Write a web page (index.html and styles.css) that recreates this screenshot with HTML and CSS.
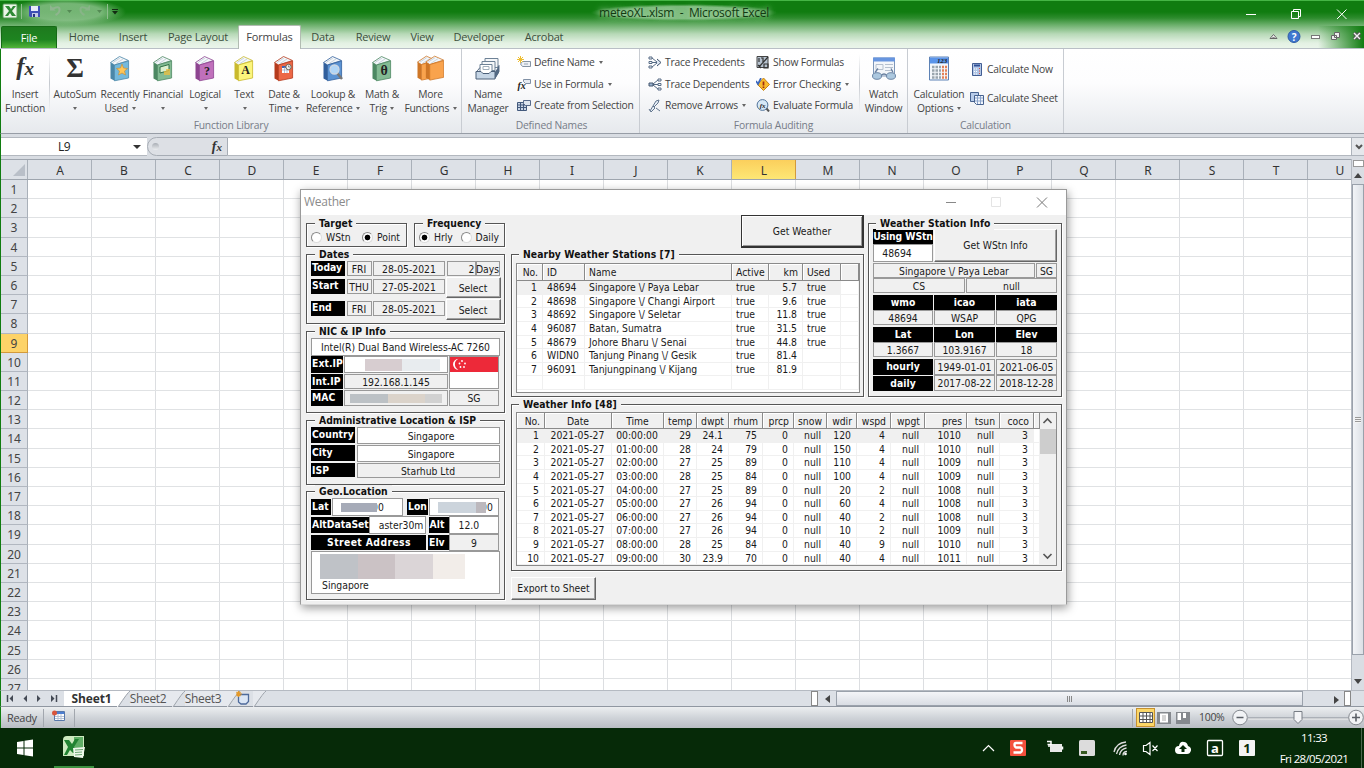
FILE: index.html
```html
<!DOCTYPE html>
<html lang="en">
<head>
<meta charset="utf-8">
<title>meteoXL.xlsm - Microsoft Excel</title>
<link rel="stylesheet" href="styles.css">
</head>
<body>
<svg class="defs" width="0" height="0">
  <symbol id="book" viewBox="0 0 20 26">
    <path d="M.5 7 9.500 1 18.500 5 4.500 9.500Z" fill="#f4f7fa" stroke="currentColor" stroke-width=".8"/>
    <path d="M3 7 10 2.500M6 8 13 3.500" stroke="#b8c4d0" stroke-width=".7"/>
    <path d="M.5 7 4.500 9.500V25.300L.5 23Z" fill="currentColor"/>
    <path class="cover" d="M4.500 9.500 18.600 5.500V22.500L4.500 25.300Z"/>
    <path d="M4.500 9.500 18.600 5.500V22.500L4.500 25.300Z" fill="none" stroke="currentColor" stroke-width=".8"/>
  </symbol>
</svg>
<div class="screen">
  <header class="top">
    <div class="titlebar">
      <div class="quick">
        <svg width="122" height="24" viewBox="0 0 122 24">
          <rect x="3" y="4" width="14" height="14" rx="1" fill="#eaf6e6" stroke="#5b9b5b"/><path d="M5 6h4l2 3 2-3h3l-4 5 4 5h-4l-2-3-2 3H5l4-5z" fill="#2f8a35"/>
          <path d="M21.500 4v15M107.500 4v15" stroke="#8fbf8f"/>
          <path d="M29 6h11v11H30l-1-1z" fill="#3d4fb5"/><path d="M31 6h7v5h-7z" fill="#e8ecfa"/><path d="M32 13h6v4h-6z" fill="#c3c9e6"/><path d="M33 14h2v3h-2z" fill="#26357e"/>
          <path d="M52 9q8-4 7.500 1 0 3-4 5" fill="none" stroke="#8fb58f" stroke-width="2"/><path d="M50 10.500V5l5.500 5.500z" fill="#8fb58f"/>
          <path d="M88 9q-8-4-7.500 1 0 3 4 5" fill="none" stroke="#88b488" stroke-width="2"/><path d="M90 10.500V5l-5.500 5.500z" fill="#88b488"/>
          <path d="M67 10h5l-2.500 3zM97 10h5l-2.500 3z" fill="#558a55"/>
          <path d="M112 9.500h6" stroke="#132b13"/><path d="M112 11h6l-3 3.500z" fill="#132b13"/>
        </svg>
      </div>
      <div class="title"><span>meteoXL.xlsm&nbsp; -&nbsp; Microsoft Excel</span></div>
      <svg class="wincontrols" width="140" height="26" viewBox="0 0 140 26" fill="none" stroke="#fff" stroke-width="1">
        <path d="M22 14.500h10M67.500 11.500h7v7h-7zM69.500 11V9.500h7v7H75M113 9.500l9.500 9.500M122.500 9.500 113 19"/>
      </svg>
    </div>
    <nav class="tabs">
      <span class="tab file">File</span><span class="tab w48">Home</span><span class="tab w50">Insert</span><span class="tab w80">Page Layout</span><span class="tab active">Formulas</span><span class="tab w44">Data</span><span class="tab w56">Review</span><span class="tab w42">View</span><span class="tab w72">Developer</span><span class="tab w58">Acrobat</span>
      <svg class="doccontrols" width="104" height="22" viewBox="0 0 104 22">
        <path d="M10 12.500 13.500 8.500 17 12.500zM12 12.500l1.500-1.500 1.500 1.500" fill="#f4f4f4" stroke="#666"/>
        <circle cx="34" cy="10.500" r="6" fill="#3f78d0" stroke="#2e5ba6"/><text x="34" y="14.500" class="help">?</text>
        <rect x="51.500" y="9.500" width="8" height="3" fill="#fff" stroke="#777"/>
        <path d="M74.500 6.500h5v5h-5zM71.500 9.500h5v4h-5z" fill="#eee" stroke="#666"/>
        <path d="M94 7l6 6M100 7l-6 6" stroke="#555" stroke-width="3.400"/><path d="M94 7l6 6M100 7l-6 6" stroke="#f2f2f2" stroke-width="1.400"/>
      </svg>
    </nav>
  </header>

  <section class="ribbon">
    <div class="group g1">
      <div class="tools">
        <div class="big w49"><i class="fx">f<small>x</small></i><b>Insert<br>Function</b></div>
        <div class="vsep"></div>
        <div class="big w50b"><i class="sigma">Σ</i><b>AutoSum<br><u></u></b></div>
        <div class="big w40"><svg class="bk blue"><use href="#book"/><path d="m12 9 1.500 4 4 .5-3 2.500 1 4-3.500-2-3.500 2 1-4-3-2.500 4-.5z" fill="#ffc658" stroke="#c98a2c" stroke-width=".6"/></svg><b>Recently<br>Used <u></u></b></div>
        <div class="big w46"><svg class="bk green"><use href="#book"/><path d="m7 12 9-2.500v6L7 18z" fill="#dcefcf" stroke="#2f7046"/><path d="M11 19h6M11 17h6M13 15h4" stroke="#f0c040" stroke-width="1.500"/></svg><b>Financial<br><u></u></b></div>
        <div class="big w38"><svg class="bk purple"><use href="#book"/><text x="12" y="20">?</text></svg><b>Logical<br><u></u></b></div>
        <div class="big w40"><svg class="bk yellow"><use href="#book"/><text x="11.500" y="19">A</text></svg><b>Text<br><u></u></b></div>
        <div class="big w40"><svg class="bk red"><use href="#book"/><path d="M8 11h7v7H8z" fill="#fff"/><path d="M8 12h7" stroke="#4063b0" stroke-width="2"/><path d="M8 15h7M10.500 12v6M13 12v6" stroke="#8798c0" stroke-width=".6"/><circle cx="14.500" cy="12" r="2.700" fill="#f3f3f3" stroke="#665"/><path d="M14.500 10.500V12H16" fill="none" stroke="#444" stroke-width=".6"/></svg><b>Date &amp;<br>Time <u></u></b></div>
        <div class="big w58"><svg class="bk navy"><use href="#book"/><path d="m14 18 5 6" stroke="#777" stroke-width="2.500"/><circle cx="11.500" cy="14.500" r="4.500" fill="#bfe0fb" fill-opacity=".85" stroke="#cfd8e2" stroke-width="1.300"/></svg><b>Lookup &amp;<br>Reference <u></u></b></div>
        <div class="big w40"><svg class="bk green"><use href="#book"/><text x="12" y="20" class="theta">θ</text></svg><b>Math &amp;<br>Trig <u></u></b></div>
        <div class="big w57"><svg class="bk orange two" viewBox="0 0 26 26"><use href="#book" width="19" height="25"/><use href="#book" x="8" width="19" height="25"/></svg><b>More<br>Functions <u></u></b></div>
      </div>
      <div class="caption">Function Library</div>
    </div>
    <div class="group g2">
      <div class="tools">
        <div class="big w52"><svg class="ic" width="26" height="26" viewBox="0 0 26 26"><path d="M10 3h13v9H10z" fill="#f5f7f9" stroke="#6e8296"/><path d="M7 6h13v9H7z" fill="#f5f7f9" stroke="#6e8296"/><path d="M5 9h12v9H5z" fill="#fff" stroke="#6e8296"/><path d="M8 11h6v3H8z" fill="none" stroke="#a0aebb"/><path d="M1 17 5 12M23 11l1-1v6l-4 7" fill="#5d7189" stroke="#5d7189"/><path d="M1 16h5l2 2h6l2-2h4v7.500H1z" fill="#c5d5e5" stroke="#4c6079"/><path d="M20 16l4-5v6l-4 6z" fill="#536983"/></svg><b>Name<br>Manager</b></div>
        <div class="smalls">
          <div class="sm"><svg viewBox="0 0 14 13"><path d="M5.500 5.500h8v5h-8l-2-2.500z" fill="#eef1f5" stroke="#8593a3"/><path d="M7 8h4" stroke="#99a6b4"/><path d="M3.500 0v7M0 3.500h7M1 1l5 5M6 1 1 6" stroke="#efbe30"/></svg>Define Name <u></u></div>
          <div class="sm"><svg viewBox="0 0 14 13"><path d="M6.500 1.500h7v4h-5l-2-2z" fill="#e6ebf2" stroke="#8090a5"/><text x="4.500" y="11" class="mini big9">fx</text></svg>Use in Formula <u></u></div>
          <div class="sm"><svg viewBox="0 0 14 13"><path d="M.5 3.500h9v8h-9z" fill="#c9d5e6" stroke="#42597c"/><path d="M0 6h9M0 8.500h9M3.500 4v7M6.500 4v7" stroke="#42597c"/><path d="M6.500 1.500h7v5h-5l-2-2z" fill="#dde5ef" stroke="#56698a"/></svg>Create from Selection</div>
        </div>
      </div>
      <div class="caption shift">Defined Names</div>
    </div>
    <div class="group g3">
      <div class="tools">
        <div class="smalls s109">
          <div class="sm"><svg viewBox="0 0 14 13"><path d="M1 1h3v2H1zM1 5.500h3v2H1zM1 10h3v2H1z" fill="#fff" stroke="#566b85"/><path d="M4 2 9 6M4 6.500h5M4 11l5-4" stroke="#566b85"/><path d="m9 3 4 3.500L9 10" fill="#dbe5f1" stroke="#44566f"/></svg>Trace Precedents</div>
          <div class="sm"><svg viewBox="0 0 14 13"><path d="M10 1h3v2h-3zM10 5.500h3v2h-3zM10 10h3v2h-3z" fill="#fff" stroke="#566b85"/><path d="M10 2 5 6M10 6.500H5M10 11 5 7" stroke="#566b85"/><path d="M1 5h4v3H1z" fill="#9bb3d0" stroke="#44566f"/></svg>Trace Dependents</div>
          <div class="sm"><svg viewBox="0 0 14 13"><path d="m5 7 3-5 3-1-1 3-4 4M2 12l3-5 2 2-4 4M8 9l4 3M1 10l2 3" fill="#e7eef7" stroke="#61758d"/></svg>Remove Arrows <u></u></div>
        </div>
        <div class="smalls s103">
          <div class="sm"><svg viewBox="0 0 14 13"><path d="M1 .5h11v11H1z" fill="#b6c2cf" stroke="#444"/><path d="M3 2v4M5 2h2v4M3 11 12 1M8 8h4v4H8zM2 9l3 3" fill="none" stroke="#333" stroke-width="1.200"/></svg>Show Formulas</div>
          <div class="sm"><svg viewBox="0 0 14 13"><path d="m7.500 0 6 6.500-6 6-6-6z" fill="#f9ba2c" stroke="#c58416"/><path d="M7.500 3.500v4M7.500 8.500V10" stroke="#9c2d11" stroke-width="1.700"/><path d="m0 3 2 3 3-6" fill="none" stroke="#3a67bf" stroke-width="1.700"/></svg>Error Checking <u></u></div>
          <div class="sm"><svg viewBox="0 0 14 13"><circle cx="6.500" cy="6" r="5.400" fill="#d7e8f7" stroke="#52749b"/><path d="m10.500 9.500 2.500 3" stroke="#555" stroke-width="2"/><text x="6.500" y="8.500" class="mini">fx</text></svg>Evaluate Formula</div>
        </div>
        <div class="vsep"></div>
        <div class="big w48b"><svg class="ic" width="26" height="26" viewBox="0 0 26 26"><path d="M2.500 2.500h21v18h-21z" fill="#f3f6fa" stroke="#7d96b8"/><path d="M2 2h22v4H2z" fill="#6795df"/><path d="M5 9h7v5H5zM14 9h8M14 12h8M14 15h8" fill="none" stroke="#b5c0ce"/><path d="M4 17l3-4M22 17l-2-4M10 20q3-3 6 0" fill="none" stroke="#677e9e" stroke-width="1.300"/><ellipse cx="6" cy="20.500" rx="4.500" ry="3.300" fill="#acc8df" stroke="#6c86a5"/><ellipse cx="20" cy="20.500" rx="4.500" ry="3.300" fill="#acc8df" stroke="#6c86a5"/></svg><b>Watch<br>Window</b></div>
      </div>
      <div class="caption">Formula Auditing</div>
    </div>
    <div class="group g4">
      <div class="tools">
        <div class="big w60"><svg class="ic" width="22" height="26" viewBox="0 0 22 26"><path d="M1.500 1.500h19v23h-19z" fill="#f4f7fb" stroke="#5d82b5"/><path d="M2 2h18v6H2z" fill="#5a94ea"/><path d="M4 11.500h9M4 15h9M4 18.500h9M4 22h9" stroke="#9aa5ad" stroke-width="2.300" stroke-dasharray="2.500 1"/><path d="M14 11.500h5M14 15h5M14 18.500h5M14 22h5" stroke="#e38158" stroke-width="2.300" stroke-dasharray="2 1"/><text x="14" y="7" class="mini">123</text></svg><b>Calculation<br>Options <u></u></b></div>
        <div class="smalls calc">
          <div class="sm"><svg viewBox="0 0 14 13"><path d="M2.500.5h9v12h-9z" fill="#b2c6e5" stroke="#425d92"/><path d="M4 2.500h6" stroke="#2f4f97" stroke-width="2"/><path d="M4 6h4M4 8.500h4M4 11h4" stroke="#fff" stroke-dasharray="1 1"/><path d="M9.500 5v7" stroke="#d24d45" stroke-dasharray="1 1.500"/></svg>Calculate Now</div>
          <div class="sm"><svg viewBox="0 0 14 13"><path d="M.5.500h8v9h-8z" fill="#b8cce9" stroke="#47628f"/><path d="M4.500 3.500h9v9h-7l-2-2z" fill="#f2f6fc" stroke="#47628f"/><path d="M5 6h8M5 9h8M7.500 4v8M10.500 4v8" stroke="#8ba4cb"/></svg>Calculate Sheet</div>
        </div>
      </div>
      <div class="caption">Calculation</div>
    </div>
  </section>

  <section class="formulabar">
    <div class="namebox"><span>L9</span><u></u></div>
    <div class="fxarea"><i class="knob"></i><span class="fxs">f<small>x</small></span></div>
    <div class="fxinput"></div>
    <div class="fxdrop"><svg width="13" height="19" viewBox="0 0 13 19"><path d="m4 7 3 3 3-3" fill="none" stroke="#555" stroke-width="2"/></svg></div>
  </section>

  <main class="sheet">
    <div class="sheetgrid">
      <div class="colheads" id="cols"><div class="corner"></div></div>
      <div id="rows"></div>
    </div>
    <div class="vscroll"><div class="split"></div><div class="arr"><i class="up"></i></div><div class="vthumb"><i></i></div><div class="arr low"><i class="down"></i></div></div>
  </main>

  <footer class="sheettabs">
    <svg class="nav" width="64" height="16" viewBox="0 0 64 16"><path d="M12 4v7L8.500 7.500zM26 4v7l-3.500-3.500zM36 4v7l3.500-3.500zM50 4v7l3.500-3.500z" fill="#444a55"/><path d="M6.500 4v7M55.500 4v7" stroke="#444a55" stroke-width="1.500"/></svg>
    <span class="st on">Sheet1</span><svg class="slash" viewBox="0 0 13 16"><path d="M0 0h13Q9 3 1 16H0z" fill="#fff"/><path d="M13 0Q11 1 1 16" fill="none" stroke="#9da3ab"/></svg>
    <span class="st">Sheet2</span><svg class="slash" viewBox="0 0 13 16"><path d="M0 0h13L1 16H0z" fill="#e6e9ee"/><path d="M13 0Q11 1 1 16" fill="none" stroke="#9da3ab"/></svg>
    <span class="st">Sheet3</span><svg class="slash" viewBox="0 0 13 16"><path d="M0 0h13L1 16H0z" fill="#e6e9ee"/><path d="M13 0Q11 1 1 16" fill="none" stroke="#9da3ab"/></svg>
    <svg class="newsheet" width="17" height="16" viewBox="0 0 17 16"><path d="M2.500 3.500h10v7l-2.500 2.500H5l-2.500-2z" fill="#dbe6f5" stroke="#4d6a9b" stroke-width="1.300"/><path d="M2.500 0v6M0 3h6M.5 1l4 4M4.500 1l-4 4" stroke="#e49a2b" stroke-width="1.200"/></svg>
    <svg class="slash" viewBox="0 0 13 16"><path d="M0 0h13L1 16H0z" fill="#e6e9ee"/><path d="M13 0Q11 1 1 16" fill="none" stroke="#9da3ab"/></svg>
    <div class="filler"></div>
    <div class="grab"></div>
    <div class="harr"><i class="left"></i></div>
    <div class="hthumb"><i></i><i></i><i></i></div>
    <div class="harr wide"><i class="right"></i></div>
    <div class="grab"></div>
    <div class="end"></div>
  </footer>

  <div class="status">
    <span class="ready">Ready</span><i class="ssep"></i>
    <svg class="macro" width="14" height="12" viewBox="0 0 14 12"><path d="M2.500 1.500h10v9h-10z" fill="#fff" stroke="#5878aa"/><path d="M3 3h9" stroke="#4c7ed1" stroke-width="2"/><path d="M3 6.500h9M3 8.500h9M6 4v6M9 4v6" stroke="#b6c3d6"/><circle cx="2.500" cy="3" r="2.500" fill="#d8553c"/></svg>
    <i class="ssep"></i>
    <div class="filler"></div>
    <i class="ssep"></i>
    <span class="view sel"><svg width="14" height="12" viewBox="0 0 14 12"><path d="M.5.500h13v10H.5zM0 4h14M0 7.500h14M4 0v11M7.500 0v11M11 0v11" fill="#fff" stroke="#555"/></svg></span>
    <span class="view"><svg width="14" height="12" viewBox="0 0 14 12"><path d="M0 0h14v12H0z" fill="#85898e"/><path d="M3 1.500h8v9H3z" fill="#fff"/><path d="M5 4h4M5 6h4M5 8h4" stroke="#aaa"/></svg></span>
    <span class="view"><svg width="14" height="12" viewBox="0 0 14 12"><path d="M0 0h14v12H0z" fill="#85898e"/><path d="M1.500 1v7H5V1M7 1v5h3V1" fill="#fff"/></svg></span>
    <span class="pct">100%</span>
    <svg class="zoom" width="132" height="20" viewBox="0 0 132 20"><path d="M16 10h108" stroke="#878d95"/><path d="M16 11h108" stroke="#eee"/><circle cx="8" cy="9.500" r="7.300" fill="#f1f3f5" stroke="#83888e"/><circle cx="124" cy="9.500" r="7.300" fill="#f1f3f5" stroke="#83888e"/><path d="M4.500 9.500h7M120 9.500h8M124 5.500v8" stroke="#5b6067" stroke-width="1.600"/><path d="M62 3.500h8v8l-4 4-4-4z" fill="#f3f4f6" stroke="#777d84"/></svg>
  </div>

  <div class="taskbar">
    <svg class="start" width="54" height="40" viewBox="0 0 54 40"><path d="m17 14 6.500-1v6.500H17zM24.500 12.800 33 11.500v8h-8.500zM17 20.500h6.500V27L17 26zM24.500 20.500H33v8l-8.500-1.300z" fill="#fff"/></svg>
    <div class="task"><svg width="24" height="24" viewBox="0 0 24 24"><path d="M5 1h17v20H1V5q0-4 4-4z" fill="#cdeac0"/><path d="M12 2h9v12H12z" fill="#5fae66"/><path d="M2 5h5l3 4 3-5h4l-5 8 4 6h-5l-3-3-3 5H2l4-8z" fill="#218332"/><path d="m11 13 12-1-2 11-9-1z" fill="#eff8ec"/><path d="m13 15 8-.5M13 17.500l7-.5M13 20l7-.5" stroke="#6ca873"/></svg></div>
    <div class="filler"></div>
    <svg class="tray" width="284" height="40" viewBox="976 0 284 40">
      <path d="m983 23 5.500-5.500L994 23" fill="none" stroke="#fff" stroke-width="1.200"/>
      <rect x="1010" y="12" width="16" height="16" rx="1" fill="#f4503c"/><path d="M1022.500 15h-6.500q-1.500 0-1.500 2t1.500 2.500h4.500q1.500.5 1.500 2.500t-1.500 2.500h-7" fill="none" stroke="#fff" stroke-width="2.400"/>
      <rect x="1050" y="16" width="12" height="8" fill="#e8e8e8"/><path d="M1047 13.500h4v3h-3.500M1049 16v3M1062.500 18.500v3" fill="none" stroke="#fff" stroke-width="1.500"/>
      <rect x="1079" y="12" width="16" height="16" rx="1.500" fill="#dcdcdc"/><path d="M1081 24.500h6" stroke="#365a20" stroke-width="3"/>
      <path d="M1114 24q2-9 12-10M1116.500 26q2-8 10-9M1119.500 27q1-6 7-7M1123 27.500q0-4 4-4" fill="none" stroke="#ddd" stroke-width="1.300"/><circle cx="1125.500" cy="26" r="1.300" fill="#fff"/>
      <path d="M1143.500 17.500h2.500l4-3v12l-4-3h-2.500zM1152.500 17.500l5 5.500M1157.500 17.500l-5 5.500" fill="none" stroke="#fff" stroke-width="1.200"/>
      <path d="M1179 26a4 4 0 0 1 0-8q1-5 5-4 3 0 4 4 3.500 1 3 4.500-1 3.500-4 3.500z" fill="#fff"/><path d="M1183 17l4 4h-2.500v3h-3v-3h-2.500z" fill="#08290a"/>
      <rect x="1207.500" y="12.500" width="15" height="15" rx="1" fill="none" stroke="#fff" stroke-width="1.300"/><text x="1215" y="24.500" class="tr">a</text>
      <rect x="1239" y="12" width="16" height="16" rx="1" fill="#f4f4f4"/><text x="1247" y="24.500" class="tr dark">1</text>
    </svg>
    <div class="clock"><span>11:33</span><span>Fri 28/05/2021</span></div>
    <i class="peek"></i>
  </div>

  <div class="dialog">
    <div class="dtitle"><span>Weather</span><svg width="116" height="25" viewBox="0 0 116 25" fill="none"><path d="M0 12.500h10" stroke="#888"/><path d="M45.500 7.500h9v9h-9z" stroke="#e4e4e4"/><path d="m91 7.500 10 10M101 7.500l-10 10" stroke="#777"/></svg></div>
    <div class="dbody">
      <div class="left">
        <div class="pair">
          <div class="frame target"><span class="lg">Target</span><label><i class="radio"></i>WStn</label><label><i class="radio on"></i>Point</label></div>
          <div class="frame freq"><span class="lg">Frequency</span><label><i class="radio on"></i>Hrly</label><label><i class="radio"></i>Daily</label></div>
        </div>
        <div class="frame dates"><span class="lg">Dates</span>
          <div class="drow"><span class="k">Today</span><span class="c">FRI</span><span class="c">28-05-2021</span><span class="duo"><span class="c num">2</span><span class="c">Days</span></span></div>
          <div class="drow r2"><span class="k">Start</span><span class="c">THU</span><span class="c">27-05-2021</span><span class="btn">Select</span></div>
          <div class="drow r3"><span class="k">End</span><span class="c">FRI</span><span class="c">28-05-2021</span><span class="btn">Select</span></div>
        </div>
        <div class="frame nic"><span class="lg">NIC &amp; IP Info</span>
          <div class="c w wide">Intel(R) Dual Band Wireless-AC 7260</div>
          <div class="nicgrid">
            <span class="k">Ext.IP</span><span class="c w"><i class="mask m1"></i></span>
            <span class="flag"><svg width="47" height="15" viewBox="0 0 47 15"><path d="M8.500 1.800a5.500 5.500 0 1 0 0 11 6 6 0 0 1 0-11" fill="#fff"/><g fill="#fff"><circle cx="12" cy="4" r=".9"/><circle cx="9.500" cy="6.500" r=".9"/><circle cx="15" cy="6.500" r=".9"/><circle cx="10.500" cy="10" r=".9"/><circle cx="14" cy="10" r=".9"/></g></svg></span>
            <span class="k">Int.IP</span><span class="c">192.168.1.145</span>
            <span class="k">MAC</span><span class="c"><i class="mask m2"></i></span><span class="c">SG</span>
          </div>
        </div>
        <div class="frame admin"><span class="lg">Administrative Location &amp; ISP</span>
          <span class="k">Country</span><span class="c w">Singapore</span>
          <span class="k">City</span><span class="c w">Singapore</span>
          <span class="k">ISP</span><span class="c nudge">Starhub Ltd</span>
        </div>
        <div class="frame geo"><span class="lg">Geo.Location</span>
          <div class="g1r"><span class="k">Lat</span><span class="c w ov"><i class="mask m3"></i>00</span><span class="k lon">Lon</span><span class="c w ov2"><i class="mask m4"></i>00</span></div>
          <div class="g2r"><span class="k">AltDataSet</span><span class="c w r">aster30m</span><span class="k al">Alt</span><span class="c w twelve">12.0</span></div>
          <div class="g3r"><span class="k ctr">Street Address</span><span class="k al">Elv</span><span class="c">9</span></div>
          <div class="addr"><div class="mask m5"></div>Singapore</div>
        </div>
      </div>
      <div class="right">
        <div class="upper">
          <div class="mid">
            <div class="getw">Get Weather</div>
            <div class="frame near"><span class="lg">Nearby Weather Stations [7]</span>
              <div class="list"><table id="near"></table></div>
            </div>
          </div>
          <div class="frame info"><span class="lg">Weather Station Info</span>
            <div class="inf0"><div class="stack"><span class="k">Using WStn</span><span class="c w">48694</span></div><span class="btn">Get WStn Info</span></div>
            <div class="inf1"><span class="c">Singapore \/ Paya Lebar</span><span class="c">SG</span></div>
            <div class="inf2"><span class="c">CS</span><span class="c">null</span></div>
            <div class="inf3">
              <span class="k">wmo</span><span class="k">icao</span><span class="k">iata</span>
              <span class="c">48694</span><span class="c">WSAP</span><span class="c">QPG</span>
              <span class="k gap">Lat</span><span class="k gap">Lon</span><span class="k gap">Elev</span>
              <span class="c">1.3667</span><span class="c">103.9167</span><span class="c">18</span>
              <span class="k gap">hourly</span><span class="c gap">1949-01-01</span><span class="c gap">2021-06-05</span>
              <span class="k last">daily</span><span class="c">2017-08-22</span><span class="c">2018-12-28</span>
            </div>
          </div>
        </div>
        <div class="frame weather"><span class="lg">Weather Info [48]</span>
          <div class="list wl"><table id="wx"></table>
            <div class="lscroll"><svg width="15" height="16" viewBox="0 0 15 16"><path d="m3.500 10 4-4 4 4" fill="none" stroke="#555" stroke-width="1.600"/></svg><i></i><svg width="15" height="17" viewBox="0 0 15 17"><path d="m3.500 6 4 4 4-4" fill="none" stroke="#555" stroke-width="1.600"/></svg></div>
          </div>
        </div>
        <div class="btn export">Export to Sheet</div>
      </div>
    </div>
  </div>
</div>
<script src="app.js"></script>
</body>
</html>
```
FILE: styles.css
```css
* { box-sizing: border-box; }
body { margin: 0; width: 1364px; height: 768px; overflow: hidden; font: 10.3px/13px "Open Sans", "Noto Sans", sans-serif; color: #444; }
.defs { position: absolute; }
svg { display: block; flex: none; }
u { display: inline-block; width: 0; height: 0; border: 2.5px solid transparent; border-top: 3px solid #666; border-bottom: 0; vertical-align: middle; margin-left: 1px; text-decoration: none; }
.screen { position: relative; display: flex; flex-direction: column; width: 1364px; height: 768px; background: #dde1e7; }
.filler { flex: 1; }

/* Title bar and ribbon tabs */
.top { height: 49px; background: linear-gradient(#45b545 0 1px, #107c10 1px 12px, #2d8c2d 18px, #6cb06c 25px, #b7d9b7 34px, #e3f1e3 43px, #eaf5ea); border-bottom: 1px solid #b9bfc6; position: relative; }
.titlebar { display: flex; height: 26px; justify-content: space-between; }
.quick { width: 340px; background: radial-gradient(ellipse 60px 14px at 66px 12px, rgba(150,200,150,.75) 60%, transparent); }
.title { width: 684px; text-align: center; font-size: 12px; line-height: 26px; color: #123a12; letter-spacing: -.3px; padding-left: 4px; }
.title span { padding: 0 8px; background: radial-gradient(closest-side, rgba(160,208,160,.75) 70%, transparent); text-shadow: 0 0 5px #a0cfa0, 0 0 8px #a0cfa0; }
.wincontrols { margin-left: 200px; }
.tabs { display: flex; padding-left: 1px; height: 22px; background: linear-gradient(90deg, transparent 1318px, #107c10 1364px); font-size: 11px; letter-spacing: -.2px; }
.tab { text-align: center; line-height: 22px; color: #3c4f3c; white-space: nowrap; }
.file { width: 56px; color: #fff; background: linear-gradient(#1e7a1e, #1e8420 60%, #52b53a); border: 1px solid #156a15; border-bottom: 0; border-radius: 2px 2px 0 0; line-height: 21px; margin-right: 3px; }
.active { width: 63px; height: 24px; margin-top: -1px; background: #fff; border: 1px solid #b2bcb2; border-bottom: 0; border-radius: 2px 2px 0 0; color: #444; z-index: 1; }
.w44 { width: 44px; } .w56 { width: 56px; } .w42 { width: 42px; } .w72 { width: 72px; } .w58 { width: 58px; } .w80 { width: 80px; }
.w48 { width: 48px; } .w50 { width: 50px; } .w50b { width: 50px; }
.doccontrols { margin-left: auto; }
.help { font: bold 10px "Open Sans", sans-serif; fill: #fff; text-anchor: middle; }

/* Ribbon */
.ribbon { display: flex; height: 85px; background: linear-gradient(#fff 0, #fdfdfe 40%, #e6e9ed); border-left: 1px solid #107c10; border-bottom: 1px solid #979da6; letter-spacing: -.2px; }
.group { display: flex; flex-direction: column; border-right: 1px solid #c8ccd2; }
.g1 { width: 461px; } .g2 { width: 178px; } .g3 { width: 268px; } .g4 { width: 156px; }
.tools { display: flex; height: 70px; }
.caption { text-align: center; color: #777c88; line-height: 13px; }
.shift { padding-left: 2px; }
.big { display: flex; flex-direction: column; align-items: center; padding-top: 6px; }
.big b { font-weight: normal; text-align: center; white-space: nowrap; line-height: 13.500px; margin-top: 6px; }
.big > i, .big > svg { height: 27px; flex: none; }
.w49 { width: 48px; } .w40 { width: 40px; } .w46 { width: 46px; } .w38 { width: 38px; } .w57 { width: 57px; } .w52 { width: 52px; } .w48b { width: 47px; } .w60 { width: 62px; }
.big.w58 { width: 58px; }
.vsep { width: 1px; height: 58px; margin-top: 5px; background: linear-gradient(transparent, #c4c8ce, transparent); }
.fx { font: italic bold 25px/24px "Liberation Serif", serif; color: #333; }
.fx small { font-size: 19px; }
.sigma { font: bold 27px/27px "Liberation Serif", serif; color: #333; }
.bk { width: 20px; height: 26px; }
.bk use { width: 20px; height: 26px; }
.bk text { font: bold 12px "Liberation Serif", serif; text-anchor: middle; fill: #222; }
.bk .theta { font-size: 14px; }
.bk.two { width: 27px; }
.bk.two use { width: 19px; }
.blue { color: #4a87a8; fill: #74b9dc; } .green { color: #4c8862; fill: #83bb93; } .purple { color: #8d4490; fill: #c070bb; }
.yellow { color: #c9b92c; fill: #fcf57c; } .red { color: #b53a1c; fill: #ec6746; } .navy { color: #315f9c; fill: #5b93d3; } .orange { color: #ce7626; fill: #f9a34d; }
.smalls { display: flex; flex-direction: column; padding: 3px 0 0 3px; gap: 0; }
.s109 { width: 112px; padding-left: 8px; } .s103 { width: 107px; padding-left: 4px; }
.sm { display: flex; align-items: center; height: 21.600px; white-space: nowrap; gap: 3px; }
.sm svg { width: 14px; height: 13px; }
.sm u { margin-left: 1px; }
.calc { padding: 6px 0 0 0; } .calc .sm { height: 29px; }
.mini { font: italic bold 7px "Liberation Serif", serif; text-anchor: middle; fill: #222; }
.big9 { font-size: 10px; }

/* Formula bar */
.formulabar { display: flex; height: 25px; padding-top: 3px; padding-bottom: 3px; background: #d8dce2; border-left: 1px solid #107c10; }
.namebox { width: 146px; background: #fff; border: solid #b3b8bf; border-width: 1px 0; display: flex; align-items: center; padding-left: 57px; font-size: 12px; color: #222; }
.namebox span { width: 75px; letter-spacing: -.4px; }
.namebox u { border-width: 4px 4px 0; border-top-color: #333; margin: 0; }
.fxarea { width: 81px; border: 1px solid #a7adb5; border-radius: 10px 0 0 10px; display: flex; justify-content: space-between; align-items: center; padding: 0 5px 0 4px; background: #dde0e5; }
.knob { width: 7px; height: 7px; border-radius: 50%; background: linear-gradient(#a9aeb5, #eceef0); }
.fxs { font: italic bold 14px/14px "Liberation Serif", serif; color: #333; }
.fxs small { font-size: 11px; }
.fxinput { flex: 1; background: #fff; border: solid #b3b8bf; border-width: 1px 0; }
.fxdrop { width: 13px; border: 1px solid #adb3bb; border-right: 0; background: #e5e8ec; }

/* Worksheet */
.sheet { display: flex; height: 531px; border-left: 1px solid #107c10; overflow: hidden; }
.sheetgrid { width: 1350px; overflow: hidden; background: #fff; }
.colheads { display: flex; height: 21px; border: solid #9ea5ae; border-width: 1px 0; background: #dde1e7; }
.corner { width: 27px; border-right: 1px solid #a9b0b9; background: #dde1e7; flex: none; display: flex; align-items: flex-end; justify-content: flex-end; padding: 0 2px 3px 0; }
.corner::after { content: ""; border: 6px solid #b9bfc8; border-top-color: transparent; border-left-color: transparent; }
.ch { width: 64px; flex: none; border-right: 1px solid #a9b0b9; text-align: center; font: 12px/21px "Noto Sans", sans-serif; color: #333; padding-left: 1px; }
.ch.sel { background: linear-gradient(#fbcf5c, #fde775); border-color: #d39a3b; }
.row { display: flex; height: 19.200px; }
.rh { width: 27px; background: #dde1e7; border-right: 1px solid #a9b0b9; border-bottom: 1px solid #b1b7c0; text-align: center; font: 12px/20px "Noto Sans", sans-serif; color: #444; overflow: visible; }
.rh.sel { background: #fdd368; border-color: #d39a3b; }
.cells { flex: 1; border-bottom: 1px solid #e0e2e4; background: repeating-linear-gradient(90deg, transparent 0 63px, #dcdee1 63px 64px); }
.vscroll { width: 13px; display: flex; flex-direction: column; background: #d9dde3; border-left: 1px solid #b4b9c1; }
.split { height: 7px; margin: 1px 0 0 1px; border: 1px solid #999; background: #fff; }
.arr { height: 17px; display: flex; align-items: center; justify-content: center; }
.up { border: 4.500px solid transparent; border-bottom: 5px solid #444; border-top: 0; }
.down { border: 4.500px solid transparent; border-top: 5px solid #444; border-bottom: 0; }
.vthumb { height: 471px; border: 1px solid #9aa1ab; background: linear-gradient(90deg, #f2f4f7, #dce0e6); display: flex; align-items: center; justify-content: center; }
.vthumb i { width: 6px; height: 6px; background: repeating-linear-gradient(#999 0 1px, #f3f3f3 1px 2px); }
.low { margin-top: auto; height: 18px; }

/* Sheet tabs and horizontal scroll */
.sheettabs { display: flex; height: 17px; border-top: 1px solid #b5bac2; border-bottom: 1px solid #9097a1; background: #dce0e6; align-items: stretch; border-left: 1px solid #107c10; }
.nav { margin-right: -1px; }
.st { width: 42px; font-size: 12px; line-height: 15px; text-align: center; letter-spacing: -.35px; background: #e6e9ee; color: #555; text-indent: -6px; white-space: nowrap; }
.st.on { width: 53px; background: #fff; font-weight: bold; color: #333; text-indent: 2px; letter-spacing: -.1px; }
.slash { width: 13px; height: 16px; }
.newsheet { margin-left: -4px; }
.grab { width: 7px; border: 1px solid #888; background: #fff; }
.harr { width: 18px; display: flex; align-items: center; justify-content: center; }
.harr.wide { width: 41px; justify-content: flex-end; padding-right: 5px; }
.harr .left { border: 4px solid transparent; border-right: 5px solid #444; border-left: 0; }
.harr .right { border: 4px solid transparent; border-left: 5px solid #444; border-right: 0; }
.hthumb { width: 467px; border: 1px solid #9aa1ab; background: linear-gradient(#f4f5f8, #d9dde4); display: flex; gap: 1px; align-items: center; justify-content: center; }
.hthumb i { width: 1px; height: 6px; background: #888; }
.end { width: 13px; }

/* Status bar */
.status { display: flex; height: 21px; align-items: center; background: linear-gradient(#eceef0, #d0d4d9 50%, #b9bdc3); border-left: 1px solid #107c10; font-size: 11px; }
.ready { width: 42px; padding-left: 6px; letter-spacing: -.3px; }
.ssep { width: 1px; height: 18px; background: #a2a7ae; }
.macro { margin: 0 8px 3px; }
.view { width: 19px; height: 19px; display: flex; align-items: center; justify-content: center; }
.sel.view { background: #fcd768; border: 1px solid #c6912f; margin-left: 3px; margin-right: -1px; }
.pct { width: 40px; padding-left: 7px; font-size: 10.500px; letter-spacing: -.3px; }

/* Taskbar */
.taskbar { display: flex; height: 40px; background: #062a08; color: #fff; }
.task { width: 40px; display: flex; align-items: center; justify-content: center; border-bottom: 2px solid #3c9140; }
.tray { margin-right: 16px; }
.tr { font: bold 13px "Open Sans", sans-serif; fill: #fff; text-anchor: middle; }
.tr.dark { fill: #082a08; }
.clock { width: 76px; display: flex; flex-direction: column; align-items: center; font: 11.500px/21px "Open Sans", sans-serif; letter-spacing: -.65px; white-space: nowrap; margin-top: -1px; }
.peek { width: 1px; background: #4d664e; margin: 0 2px 0 9px; }

/* Weather window, floating over the worksheet */
.dialog { position: absolute; left: 300px; top: 189px; width: 767px; height: 416px; border: 1px solid #9a9a9a; border-bottom-color: #d8d8d8; background: #f0f0f0; box-shadow: 1px 3px 9px rgba(0,0,0,.4); color: #1a1a1a; font: 10.3px/13px "DejaVu Sans Condensed", "Noto Sans", sans-serif; }
.dtitle { display: flex; justify-content: space-between; height: 25px; background: #fff; font: 12px/24px "Open Sans", sans-serif; letter-spacing: -.25px; color: #8b8b8b; padding: 0 4px 0 3px; }
.dbody { display: flex; gap: 6px; padding-left: 5px; }
.frame { position: relative; border: 1px solid #555; box-shadow: inset 1px 1px #fff, 1px 1px #fff; }
.lg { position: absolute; top: -7px; left: 8px; padding: 0 4px; background: #f0f0f0; font-weight: bold; line-height: 13px; white-space: nowrap; letter-spacing: .03px; color: #111; }
.right .lg { left: 7px; letter-spacing: .07px; }
.k { background: #000; color: #fff; font-weight: bold; white-space: nowrap; line-height: 13px; letter-spacing: .05px; padding-left: 1px; display: block; }
.c { border: 1px solid #999; background: #f0f0f0; display: flex; align-items: center; justify-content: center; white-space: nowrap; line-height: 12px; }
.w { background: #fff; }
.btn { display: flex; align-items: center; justify-content: center; border: 1px solid; border-color: #fff #666 #666 #fff; box-shadow: inset -1px -1px #a0a0a0; background: #f0f0f0; padding-top: 2px; }
.dbody > .left { width: 199px; }
.pair { display: flex; justify-content: space-between; margin-top: 8px; }
.target { width: 101px; } .freq { width: 91px; }
.pair .frame { height: 24px; display: flex; align-items: flex-end; padding: 0 5px 2px 4px; justify-content: space-between; }
.pair label { display: flex; align-items: center; gap: 4px; line-height: 13px; }
.pair .target label:last-child { padding-right: 1px; }
.radio { width: 11px; height: 11px; border-radius: 50%; background: #fff; border: 1px solid; border-color: #888 #ddd #ddd #888; }
.radio.on { background: radial-gradient(circle, #000 0 2.500px, #fff 3.200px); }
.dates { height: 70px; margin-top: 7px; padding: 6px 4px 0; }
.drow { display: grid; grid-template-columns: 34px 25px 72px 54px; column-gap: 1.500px; grid-template-rows: 15px; margin-bottom: 3px; }
.r2 { margin-bottom: 7px; }
.drow .btn { height: 21px; margin-top: -2px; margin-left: -1px; }
.duo { display: grid; grid-template-columns: 29px 24px; }
.num { justify-content: flex-end; }
.nic { height: 82px; margin-top: 7px; padding: 6px 4px 0; }
.wide { height: 18px; }
.nicgrid { display: grid; grid-template-columns: 32px 104px 50px; grid-template-rows: 17px 15px 16px; gap: 1px; margin-top: 0; }
.nicgrid .k { line-height: 15px; }
.flag { grid-row: span 2; border: 1px solid #999; background: linear-gradient(#ed2939 15px, #fff 15px); padding-left: 0; overflow: hidden; }
.mask { display: block; flex: none; }
.m1 { width: 75px; height: 12px; background: linear-gradient(90deg, #d7cdd0 50%, #e8ecef 50%); margin-left: 12px; }
.m2 { width: 92px; height: 9px; background: linear-gradient(90deg, #bcc1c5 41%, #dbd3ca 41% 82%, #d1d1d1 82%); }
.admin { height: 65px; margin-top: 7px; padding: 6px 4px 0; display: grid; grid-template-columns: 44px 143px; grid-template-rows: 17px 17px 15px; gap: 1.500px; row-gap: 1px; align-content: start; }
.admin .k { margin-bottom: 1px; line-height: 15px; }
.admin .c { padding-left: 6px; }
.nudge.nudge { padding-left: 0; }
.geo { height: 109px; margin-top: 6px; padding: 6px 4px 0; }
.g1r, .g2r, .g3r { display: grid; }
.geo .k { margin-top: 1px; margin-bottom: 1px; line-height: 14px; }
.g1r { grid-template-columns: 20px 71px 24px 70px; column-gap: 1px; grid-template-rows: 18px; }
.g1r .lon { margin-left: 3px; }
.g2r { grid-template-columns: 58px 57px 22px 50px; column-gap: .3px; grid-template-rows: 18px; }
.g2r .k { letter-spacing: 0; }
.g3r { grid-template-columns: 115px 23px 50px; grid-template-rows: 17px; }
.al { margin-left: 2px; }
.ctr.ctr { text-align: center; letter-spacing: .4px; }
.r { justify-content: flex-end; padding-right: 2px; }
.twelve { padding-right: 10px; }
.ov { justify-content: flex-start; padding-left: 8px; } .ov2 { justify-content: flex-start; padding-left: 8px; }
.m3 { width: 36px; height: 9px; background: #a6abb8; } .m4 { width: 48px; height: 11px; background: linear-gradient(90deg, #ccd4dc 38px, #bcb8bd 38px); }
.ov .mask, .ov2 .mask { margin-right: -5px; z-index: 1; }
.addr { height: 43px; border: 1px solid #999; background: #fff; padding: 2px 10px; line-height: 13px; }
.m5 { width: 145px; height: 25px; margin-left: -2px; background: linear-gradient(90deg, #bfc2c7 38px, #cbc2c5 38px 75px, #dbd5d7 75px 113px, #f2ede9 113px); }
.upper { display: flex; gap: 4px; }
.mid { width: 353px; }
.getw { width: 123px; height: 33px; margin: 0 0 0 230px; border: 1px solid #333; border-width: 1px 2px 2px 1px; box-shadow: inset 1px 1px #fff, inset -1px -1px #999; display: flex; align-items: center; justify-content: center; }
.near { height: 143px; margin-top: 6px; padding: 8px 4px 0; }
.list { border: 1px solid #8a8a8a; background: #fff; height: 130px; overflow: hidden; width: 344px; }
table { border-collapse: separate; border-spacing: 0; table-layout: fixed; }
th { height: 16px; padding: 0 4px 0 4px; background: #f0f0f0; font-weight: normal; border-right: 1px solid #8a8a8a; border-bottom: 1px solid #8a8a8a; box-shadow: inset 1px 1px #fff; line-height: 14px; overflow: hidden; }
#near th { height: 17px; }
td { height: 13.620px; padding: 0 5px 0 4px; line-height: 12.620px; border-right: 1px solid #f0f0f0; border-bottom: 1px solid #f0f0f0; white-space: nowrap; }
th, td { text-align: left; }
.n { text-align: right; } .m { text-align: center; }
tr.hot td { background: #f0f0f0; }
tr.hot td:last-child { background: #fff; }
.info { width: 194px; height: 174px; margin-top: 8px; padding: 5px 4px 0 4px; }
.info .k { text-align: center; padding: 0; }
.inf0 { display: grid; grid-template-columns: 61px 123px; height: 33px; }
.stack .k { height: 15px; line-height: 15px; margin-right: 1px; letter-spacing: -.1px; }
.stack .c { height: 18px; padding-right: 12px; margin-right: 1px; }
.inf0 .btn { padding-top: 0; }
.inf1 { display: grid; grid-template-columns: 162px 21px; gap: 1px; height: 15px; margin-top: 1px; }
.inf2 { display: grid; grid-template-columns: 92px 91px; gap: 1px; height: 15px; }
.inf3 { display: grid; grid-template-columns: 60px 61px 61px; column-gap: 1px; grid-template-rows: 15px 15px 17px 15px 18px 16px; margin-top: 2px; }
.inf3 .gap { margin-top: 2px; }
.inf3 .k { line-height: 14px; }
.inf3 .k.last { margin-top: 1px; }
.weather { width: 551px; height: 167px; margin-top: 7px; padding: 7px 4px 0; }
.wl { display: flex; width: 541px; height: 154px; }
.wl table { width: 523px; flex: none; }
.lscroll { width: 16px; display: flex; flex-direction: column; justify-content: space-between; background: #f0f0f0; }
.lscroll i { height: 25px; background: #cdcdcd; margin-bottom: auto; }
.export { width: 85px; height: 23px; margin-top: 6px; padding-top: 0; }
```
FILE: app.js
```js
const rows = document.getElementById('rows');
const cols = document.getElementById('cols');
for (const letter of 'ABCDEFGHIJKLMNOPQRSTU') {
  cols.insertAdjacentHTML('beforeend', `<div class="ch${letter === 'L' ? ' sel' : ''}">${letter}</div>`);
}
for (let i = 1; i <= 27; i++) {
  rows.insertAdjacentHTML('beforeend', `<div class="row"><div class="rh${i === 9 ? ' sel' : ''}">${i}</div><div class="cells"></div></div>`);
}

function fill(id, columns, data) {
  const head = columns.map(([name, , align]) => `<th class="${align}">${name}</th>`).join('');
  const body = data.map((r, i) => `<tr${i ? '' : ' class="hot"'}>` +
    columns.map(([, , align], c) => `<td class="${align}">${r[c] ?? ''}</td>`).join('') + '</tr>').join('');
  const group = columns.map(([, width]) => `<col style="width:${width}px">`).join('');
  const table = document.getElementById(id);
  table.style.width = columns.reduce((sum, c) => sum + c[1], 0) + 'px';
  table.innerHTML = `<colgroup>${group}</colgroup><tr>${head}</tr>${body}`;
}

fill('near', [['No.', 26, 'n'], ['ID', 42, ''], ['Name', 147, ''], ['Active', 37, ''], ['km', 34, 'n'], ['Used', 38, ''], ['', 18, '']], [
  [1, '48694', 'Singapore \\/ Paya Lebar', 'true', '5.7', 'true'],
  [2, '48698', 'Singapore \\/ Changi Airport', 'true', '9.6', 'true'],
  [3, '48692', 'Singapore \\/ Seletar', 'true', '11.8', 'true'],
  [4, '96087', 'Batan, Sumatra', 'true', '31.5', 'true'],
  [5, '48679', 'Johore Bharu \\/ Senai', 'true', '44.8', 'true'],
  [6, 'WIDN0', 'Tanjung Pinang \\/ Gesik', 'true', '81.4'],
  [7, '96091', 'Tanjungpinang \\/ Kijang', 'true', '81.9'],
  []
]);

const readings = [
  [29, 24.1, 75, 120, 4, 1010], [28, 24, 79, 150, 4, 1010], [27, 25, 89, 110, 4, 1009], [28, 25, 84, 100, 4, 1009],
  [27, 25, 89, 20, 2, 1008], [27, 26, 94, 60, 4, 1008], [27, 26, 94, 40, 2, 1008], [27, 26, 94, 10, 2, 1009],
  [28, 25, 84, 40, 9, 1010], [30, 23.9, 70, 40, 4, 1011]
];
fill('wx', [['No.', 28, 'n'], ['Date', 67, 'm'], ['Time', 52, 'm'], ['temp', 33, 'n'], ['dwpt', 32, 'n'], ['rhum', 34, 'n'], ['prcp', 31, 'n'],
  ['snow', 33, 'n'], ['wdir', 30, 'n'], ['wspd', 34, 'n'], ['wpgt', 34, 'n'], ['pres', 42, 'n'], ['tsun', 33, 'n'], ['coco', 34, 'n'], ['', 6, '']],
  readings.map(([temp, dwpt, rhum, wdir, wspd, pres], i) =>
    [i + 1, '2021-05-27', `0${i}:00:00`, temp, dwpt, rhum, 0, 'null', wdir, wspd, 'null', pres, 'null', 3, '']));
```
